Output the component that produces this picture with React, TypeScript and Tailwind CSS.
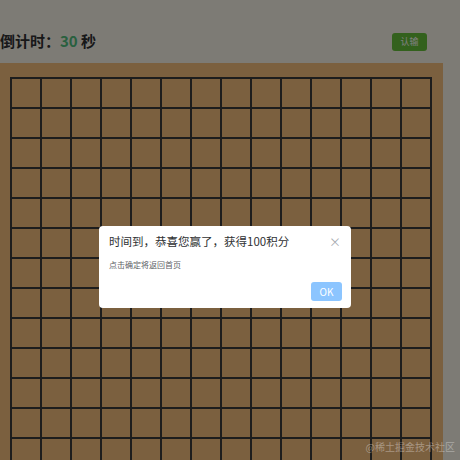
import { useState } from "react";

const COLS = 14;
const ROWS = 14;

export default function App() {
  const [seconds] = useState(30);
  const [showDialog, setShowDialog] = useState(true);

  const cells = Array.from({ length: COLS * ROWS });

  return (
    <div
      className="relative h-[460px] w-[460px] overflow-hidden bg-[#faf6ea]"
      style={{ fontFamily: '"Noto Sans CJK SC", "Noto Sans", sans-serif' }}
    >
      {/* top bar: countdown + surrender */}
      <div className="flex h-[63px] items-center justify-between pr-[33px] pt-[20px]">
        <div className="text-[15px] font-bold text-[#303133]">
          倒计时：<span className="text-[#52c07e]">{seconds}</span> 秒
        </div>
        <button className="h-[18px] w-[35px] rounded-[3px] bg-[#67c23a] text-[9px] text-white">
          认输
        </button>
      </div>

      {/* board */}
      <div className="-ml-[5px] w-[448px] bg-[#f6c07f] pl-[15px] pt-[14px] pb-[14px]">
        <div className="grid w-[422px] grid-cols-[repeat(14,30px)] border border-[#3a3a3a]">
          {cells.map((_, i) => (
            <div key={i} className="h-[30px] border border-[#3a3a3a]" />
          ))}
        </div>
      </div>

      {/* modal mask */}
      {showDialog && (
        <div className="absolute inset-0 bg-black/50">
          <div className="absolute left-[99px] top-[226px] w-[252px] rounded-[4px] bg-white pb-[7px]">
            <div className="flex items-center justify-between pl-[10px] pr-[10px] pt-[7px]">
              <span className="text-[11.5px] text-[#303133]">时间到，恭喜您赢了，获得100积分</span>
              <button
                onClick={() => setShowDialog(false)}
                className="text-[12px] leading-none text-[#a8abb2]"
              >
                ×
              </button>
            </div>
            <div className="pl-[10px] pt-[9px] text-[8px] text-[#606266]">点击确定将返回首页</div>
            <div className="flex justify-end pr-[9px] pt-[11px]">
              <button
                onClick={() => setShowDialog(false)}
                className="h-[19px] w-[31px] rounded-[3px] bg-[#8cc5ff] text-[10px] text-white"
              >
                OK
              </button>
            </div>
          </div>
        </div>
      )}

      <div className="absolute bottom-[6px] right-[5px] text-[10px] text-white/35">@稀土掘金技术社区</div>
    </div>
  );
}
